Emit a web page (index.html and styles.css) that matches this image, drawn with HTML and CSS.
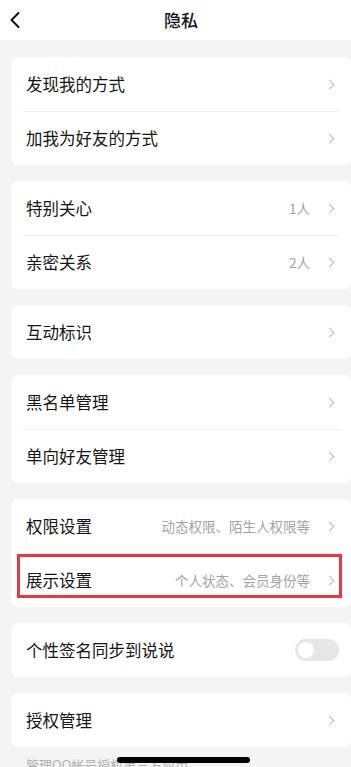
FILE: index.html
```html
<!DOCTYPE html>
<html lang="zh">
<head>
<meta charset="utf-8">
<link rel="stylesheet" href="styles.css">
</head>
<body>
<div class="page">
  <header class="topbar">
    <svg class="back" width="12" height="18" viewBox="0 0 12 18"><path d="M9.5 2 L2.5 9 L9.5 16" fill="none" stroke="#111" stroke-width="2" stroke-linecap="round" stroke-linejoin="round"/></svg>
    <div class="title">隐私</div>
  </header>

  <main class="list">
    <section class="card">
      <div class="row"><span class="label">发现我的方式</span><span class="chev"></span></div>
      <div class="row"><span class="label">加我为好友的方式</span><span class="chev"></span></div>
    </section>

    <section class="card">
      <div class="row"><span class="label">特别关心</span><span class="value">1人</span><span class="chev"></span></div>
      <div class="row"><span class="label">亲密关系</span><span class="value">2人</span><span class="chev"></span></div>
    </section>

    <section class="card">
      <div class="row"><span class="label">互动标识</span><span class="chev"></span></div>
    </section>

    <section class="card">
      <div class="row"><span class="label">黑名单管理</span><span class="chev"></span></div>
      <div class="row"><span class="label">单向好友管理</span><span class="chev"></span></div>
    </section>

    <section class="card">
      <div class="row"><span class="label">权限设置</span><span class="value">动态权限、陌生人权限等</span><span class="chev"></span></div>
      <div class="row highlighted"><span class="label">展示设置</span><span class="value">个人状态、会员身份等</span><span class="chev"></span><span class="mark"></span></div>
    </section>

    <section class="card">
      <div class="row toggle-row"><span class="label">个性签名同步到说说</span><span class="switch"><span class="knob"></span></span></div>
    </section>

    <section class="card">
      <div class="row"><span class="label">授权管理</span><span class="chev"></span></div>
    </section>

    <p class="note">管理QQ帐号授权第三方应用</p>
  </main>
  <div class="home-bar"></div>
</div>
</body>
</html>
```

FILE: styles.css
```css
html, body {
  margin: 0;
  padding: 0;
  overflow: hidden;
  background: #f4f4f4;
}

body {
  width: 362px;
  height: 767px;
  font-family: "Noto Sans CJK SC", "Noto Sans", sans-serif;
  color: #111;
}

.page {
  position: relative;
  width: 362px;
  height: 767px;
}

.topbar {
  height: 40px;
  background: #fff;
  display: flex;
  align-items: center;
  justify-content: center;
  position: relative;
}

.back {
  position: absolute;
  left: 9px;
  top: 11px;
}

.title {
  font-size: 17px;
  font-weight: 500;
  line-height: 20px;
  margin-top: 0px;
}

.list {
  padding-top: 17px;
  display: flex;
  flex-direction: column;
  gap: 16px;
}

.card {
  margin: 0 11px;
  background: #fff;
  border-radius: 7px;
}

.row {
  position: relative;
  height: 54px;
  display: flex;
  align-items: center;
  padding: 0 17px 0 15px;
}

.row + .row::before {
  content: "";
  position: absolute;
  top: 0;
  left: 12px;
  right: 11px;
  height: 1px;
  background: #efefef;
}

.label {
  flex: 1;
  font-size: 16.5px;
  line-height: 20px;
  color: #151515;
}

.value {
  font-size: 13.5px;
  color: #a3a3a3;
  margin-right: 16px;
  line-height: 18px;
}

.chev {
  width: 6px;
  height: 6px;
  border-top: 1.4px solid #b5b5b5;
  border-right: 1.4px solid #b5b5b5;
  transform: rotate(45deg);
  margin-right: 1px;
}

.mark {
  position: absolute;
  left: 6px;
  top: 1px;
  width: 319px;
  height: 38px;
  border: 3px solid #e23a40;
}

.toggle-row {
  padding-right: 12px;
}

.switch {
  width: 44px;
  height: 22px;
  border-radius: 11px;
  background: #e6e6e6;
  display: flex;
  align-items: center;
  padding-left: 3px;
  box-sizing: border-box;
}

.knob {
  width: 16px;
  height: 16px;
  border-radius: 50%;
  background: #fff;
}

.note {
  margin: -7px 0 0 26px;
  font-size: 13px;
  line-height: 18px;
  color: #b0b0b0;
}

.home-bar {
  position: absolute;
  left: 117px;
  top: 757px;
  width: 133px;
  height: 6px;
  border-radius: 3px;
  background: #000;
}
```
